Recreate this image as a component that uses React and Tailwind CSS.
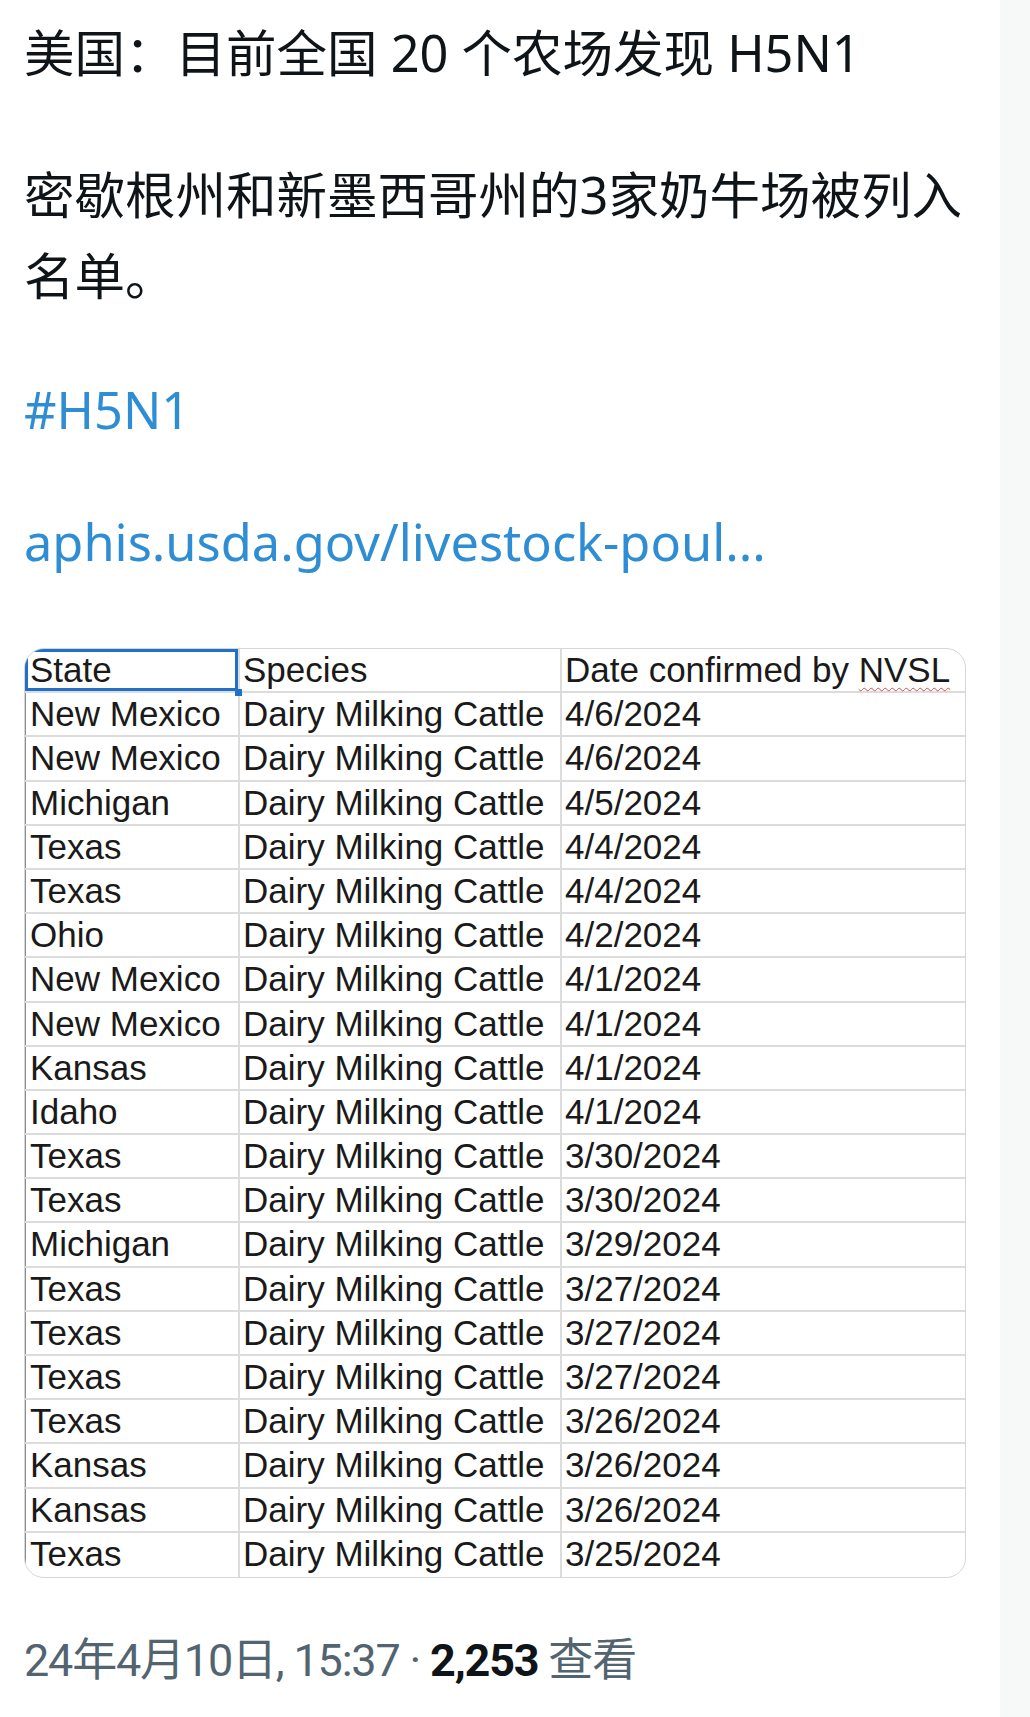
import React from "react";

const rows = [
    ["New Mexico", "4/6/2024"],
    ["New Mexico", "4/6/2024"],
    ["Michigan", "4/5/2024"],
    ["Texas", "4/4/2024"],
    ["Texas", "4/4/2024"],
    ["Ohio", "4/2/2024"],
    ["New Mexico", "4/1/2024"],
    ["New Mexico", "4/1/2024"],
    ["Kansas", "4/1/2024"],
    ["Idaho", "4/1/2024"],
    ["Texas", "3/30/2024"],
    ["Texas", "3/30/2024"],
    ["Michigan", "3/29/2024"],
    ["Texas", "3/27/2024"],
    ["Texas", "3/27/2024"],
    ["Texas", "3/27/2024"],
    ["Texas", "3/26/2024"],
    ["Kansas", "3/26/2024"],
    ["Kansas", "3/26/2024"],
    ["Texas", "3/25/2024"],
];

function Sheet() {
    return (
        <div className="mt-[66px] w-[942px] rounded-[20px] border border-[#d3d7da] overflow-hidden font-['Liberation_Sans',Arial,sans-serif] text-[35px] text-[#1a1a1a]">
            <div className="grid grid-cols-[213px_322px_1fr] h-[44.2px] leading-[42px] border-b-2 border-[#dcdcdc]">
                <div className="relative pl-[4px] border-l border-[#8c8c8c]">
                    State
                    <div className="absolute inset-0 -left-px border-[3px] border-[#1f70c6]"></div>
                    <div className="absolute -right-[4px] -bottom-[5px] w-[7px] h-[7px] bg-[#1f70c6]"></div>
                </div>
                <div className="pl-[3px] border-l-2 border-[#dcdcdc]">Species</div>
                <div className="pl-[3px] border-l-2 border-[#dcdcdc] whitespace-nowrap">
                    Date confirmed by <span className="underline decoration-wavy decoration-[#e04a4a] decoration-1 underline-offset-[5px]">NVSL</span>
                </div>
            </div>
            {rows.map((r, i) => (
                <div key={i} className={"grid grid-cols-[213px_322px_1fr] h-[44.2px] leading-[42px] " + (i < rows.length - 1 ? "border-b-2 border-[#dcdcdc]" : "")}>
                    <div className="pl-[4px] border-l border-[#8c8c8c] whitespace-nowrap">{r[0]}</div>
                    <div className="pl-[3px] border-l-2 border-[#dcdcdc] whitespace-nowrap">Dairy Milking Cattle</div>
                    <div className="pl-[3px] border-l-2 border-[#dcdcdc]">{r[1]}</div>
                </div>
            ))}
        </div>
    );
}

export default function App() {
    return (
        <div className="flex min-h-[1717px] bg-white">
            <main className="w-[1000px] pl-[24px] pt-[13px] font-['Noto_Sans','Noto_Sans_CJK_SC',sans-serif] text-[50.5px] text-[#0f1419]">
                <p className="leading-[80px]">美国：目前全国 20 个农场发现 H5N1</p>
                <p className="mt-[61px] leading-[81px]">密歇根州和新墨西哥州的3家奶牛场被列入名单。</p>
                <p className="mt-[54px] leading-[80px] text-[#2f8ed3]">#H5N1</p>
                <p className="mt-[52px] leading-[80px] text-[#2f8ed3]">aphis.usda.gov/livestock-poul...</p>
                <Sheet />
                <p className="mt-[53px] leading-[60px] font-['Roboto','Noto_Sans_CJK_SC',sans-serif] text-[45px] tracking-[-1.2px] text-[#536471]">
                    24年4月10日, 15:37 · <span className="font-bold text-[#0f1419]">2,253</span> 查看
                </p>
            </main>
            <aside className="flex-1 bg-[#f7f8f8]"></aside>
        </div>
    );
}
